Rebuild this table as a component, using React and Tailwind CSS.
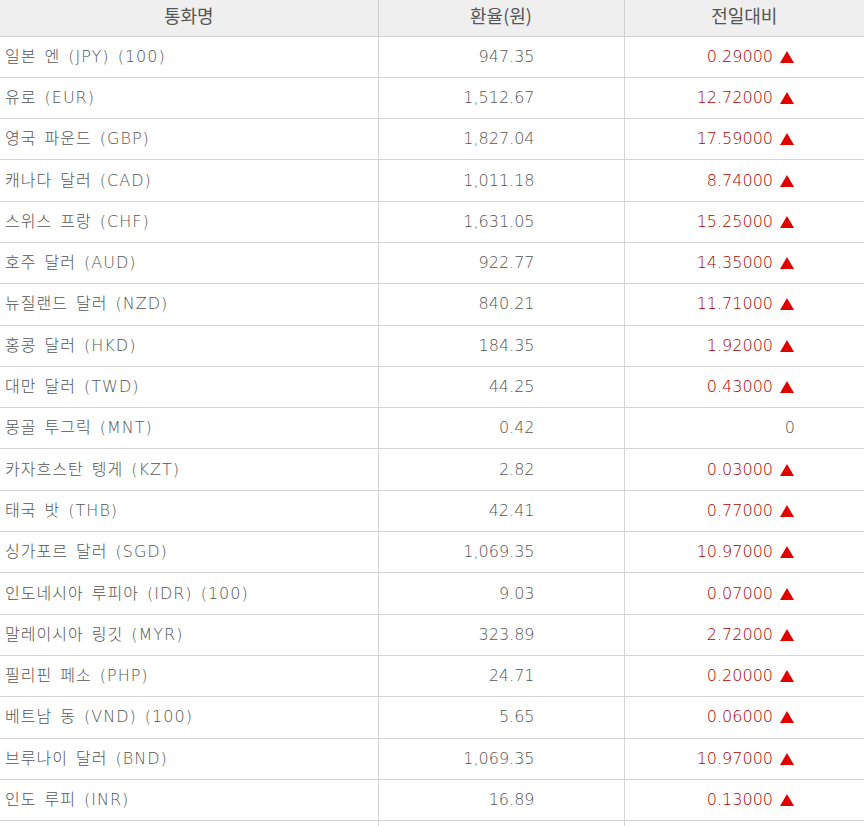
const rows = [
  ['일본 엔 (JPY) (100)', '947.35', '0.29000', true],
  ['유로 (EUR)', '1,512.67', '12.72000', true],
  ['영국 파운드 (GBP)', '1,827.04', '17.59000', true],
  ['캐나다 달러 (CAD)', '1,011.18', '8.74000', true],
  ['스위스 프랑 (CHF)', '1,631.05', '15.25000', true],
  ['호주 달러 (AUD)', '922.77', '14.35000', true],
  ['뉴질랜드 달러 (NZD)', '840.21', '11.71000', true],
  ['홍콩 달러 (HKD)', '184.35', '1.92000', true],
  ['대만 달러 (TWD)', '44.25', '0.43000', true],
  ['몽골 투그릭 (MNT)', '0.42', '0', false],
  ['카자흐스탄 텡게 (KZT)', '2.82', '0.03000', true],
  ['태국 밧 (THB)', '42.41', '0.77000', true],
  ['싱가포르 달러 (SGD)', '1,069.35', '10.97000', true],
  ['인도네시아 루피아 (IDR) (100)', '9.03', '0.07000', true],
  ['말레이시아 링깃 (MYR)', '323.89', '2.72000', true],
  ['필리핀 페소 (PHP)', '24.71', '0.20000', true],
  ['베트남 동 (VND) (100)', '5.65', '0.06000', true],
  ['브루나이 달러 (BND)', '1,069.35', '10.97000', true],
  ['인도 루피 (INR)', '16.89', '0.13000', true],
];

function Up() {
  return (
    <svg width="16" height="14" viewBox="0 0 16 14" className="ml-[6px] inline-block">
      <polygon points="8,1 15,13 1,13" fill="#e00000" />
    </svg>
  );
}

export default function App() {
  return (
    <div className="w-[864px] h-[826px] overflow-hidden bg-white">
      <table className="w-[864px] table-fixed border-collapse">
        <colgroup>
          <col className="w-[378px]" />
          <col className="w-[246px]" />
          <col />
        </colgroup>
        <thead>
          <tr className="h-[36px] bg-[#efefef] text-[#555] text-[18px] font-['Noto_Sans_CJK_KR',sans-serif]">
            <th className="font-normal border-b border-[#cfcfcf] border-r pb-[4px]">통화명</th>
            <th className="font-normal border-b border-[#cfcfcf] border-r pb-[4px]">환율(원)</th>
            <th className="font-normal border-b border-[#cfcfcf] pb-[4px]">전일대비</th>
          </tr>
        </thead>
        <tbody className="text-[16px] text-[#555] font-['DejaVu_Sans','Noto_Sans_CJK_KR',sans-serif]">
          {rows.map(([name, rate, diff, up]) => (
            <tr key={name} className="h-[41.3px]">
              <td className="pl-[5px] border-b border-r border-[#d4d4d4] font-extralight whitespace-nowrap tracking-[1px] [word-spacing:2px]">{name}</td>
              <td className="pr-[89px] text-right border-b border-r border-[#d4d4d4] font-extralight">{rate}</td>
              <td className="pr-[69px] text-right border-b border-[#d4d4d4] font-extralight">
                {up ? (
                  <span className="inline-flex items-center text-[#b00000]">
                    {diff}
                    <Up />
                  </span>
                ) : (
                  <span>{diff}</span>
                )}
              </td>
            </tr>
          ))}
          <tr className="h-[41.3px]">
            <td className="border-r border-[#d4d4d4]"></td>
            <td className="border-r border-[#d4d4d4]"></td>
            <td></td>
          </tr>
        </tbody>
      </table>
    </div>
  );
}
